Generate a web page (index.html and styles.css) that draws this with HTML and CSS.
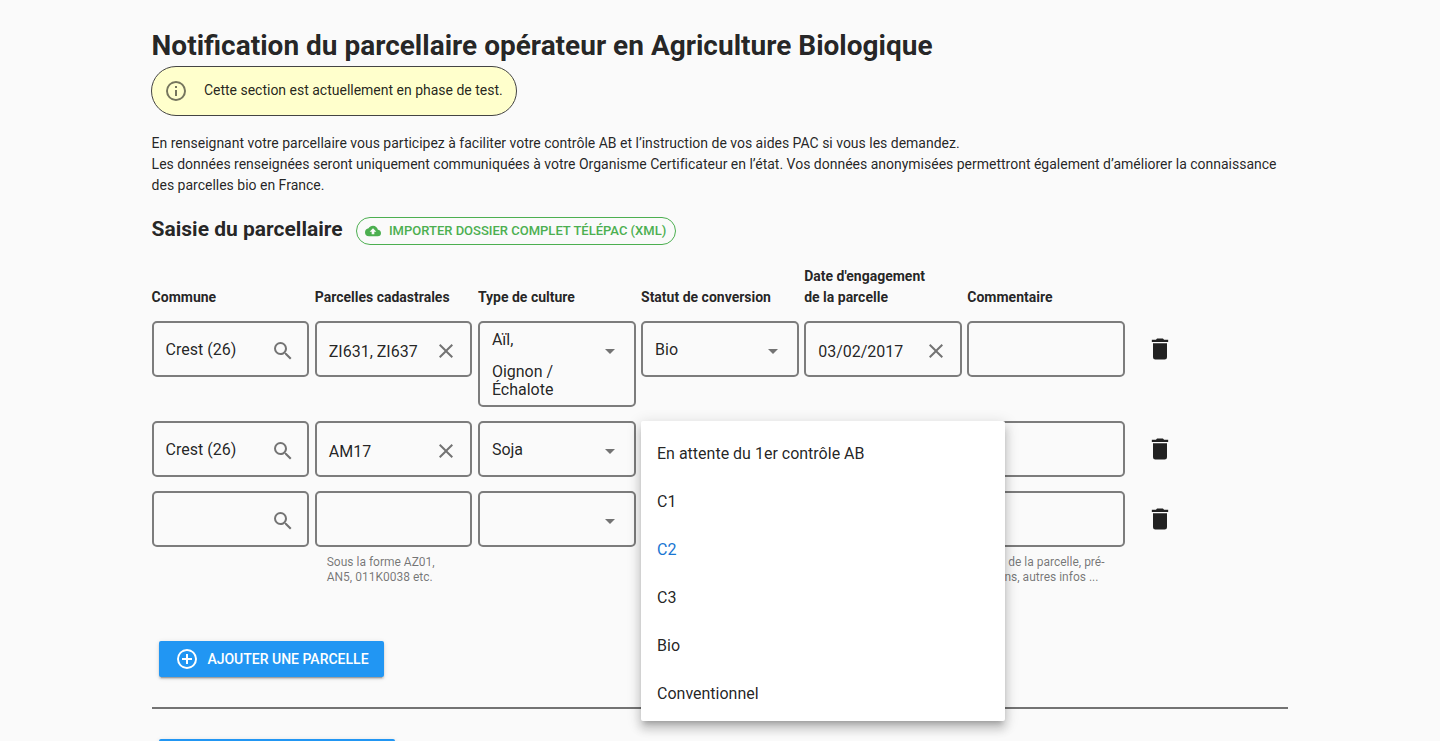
FILE: index.html
```html
<!DOCTYPE html>
<html lang="fr">
<head>
<meta charset="utf-8">
<title>Notification du parcellaire</title>
<link rel="stylesheet" href="styles.css">
</head>
<body>
<svg class="defs" width="0" height="0" aria-hidden="true">
  <symbol id="search" viewBox="0 0 24 24"><path d="M9.5,3A6.5,6.5 0 0,1 16,9.5C16,11.11 15.41,12.59 14.44,13.73L14.71,14H15.5L20.5,19L19,20.5L14,15.5V14.71L13.73,14.44C12.59,15.41 11.11,16 9.5,16A6.5,6.5 0 0,1 3,9.5A6.5,6.5 0 0,1 9.5,3M9.5,5C7,5 5,7 5,9.5C5,12 7,14 9.5,14C12,14 14,12 14,9.5C14,7 12,5 9.5,5Z"/></symbol>
  <symbol id="close" viewBox="0 0 24 24"><path d="M19,6.41L17.59,5L12,10.59L6.41,5L5,6.41L10.59,12L5,17.59L6.41,19L12,13.41L17.59,19L19,17.59L13.41,12L19,6.41Z"/></symbol>
  <symbol id="down" viewBox="0 0 24 24"><path d="M7,10L12,15L17,10H7Z"/></symbol>
  <symbol id="trash" viewBox="0 0 24 24"><path d="M19,4H15.5L14.5,3H9.5L8.5,4H5V6H19M6,19A2,2 0 0,0 8,21H16A2,2 0 0,0 18,19V7H6V19Z"/></symbol>
  <symbol id="info" viewBox="0 0 24 24"><path d="M11,9H13V7H11M12,20C7.59,20 4,16.41 4,12C4,7.59 7.59,4 12,4C16.41,4 20,7.59 20,12C20,16.41 16.41,20 12,20M12,2A10,10 0 0,0 2,12A10,10 0 0,0 12,22A10,10 0 0,0 22,12A10,10 0 0,0 12,2M11,17H13V11H11V17Z"/></symbol>
  <symbol id="plus" viewBox="0 0 24 24"><path d="M12,20C7.59,20 4,16.41 4,12C4,7.59 7.59,4 12,4C16.41,4 20,7.59 20,12C20,16.41 16.41,20 12,20M12,2A10,10 0 0,0 2,12A10,10 0 0,0 12,22A10,10 0 0,0 22,12A10,10 0 0,0 12,2M13,7H11V11H7V13H11V17H13V13H17V11H13V7Z"/></symbol>
  <symbol id="upload" viewBox="0 0 24 24"><path d="M14,13V17H10V13H7L12,8L17,13M19.35,10.03C18.67,6.59 15.64,4 12,4C9.11,4 6.6,5.64 5.35,8.03C2.34,8.36 0,10.9 0,14A6,6 0 0,0 6,20H19A5,5 0 0,0 24,15C24,12.36 21.95,10.22 19.35,10.03Z"/></symbol>
</svg>
<main class="page">
  <h1>Notification du parcellaire opérateur en Agriculture Biologique</h1>
  <div class="alert"><svg class="icon"><use href="#info"/></svg><span>Cette section est actuellement en phase de test.</span></div>
  <p class="intro">En renseignant votre parcellaire vous participez à faciliter votre contrôle AB et l’instruction de vos aides PAC si vous les demandez.<br>Les données renseignées seront uniquement communiquées à votre Organisme Certificateur en l’état. Vos données anonymisées permettront également d’améliorer la connaissance des parcelles bio en France.</p>
  <div class="heading">
    <h2>Saisie du parcellaire</h2>
    <button class="import"><svg class="icon"><use href="#upload"/></svg><span>Importer dossier complet Télépac (XML)</span></button>
  </div>
  <div class="row labels">
    <span>Commune</span><span>Parcelles cadastrales</span><span>Type de culture</span><span>Statut de conversion</span><span>Date d'engagement<br>de la parcelle</span><span>Commentaire</span>
  </div>
  <div class="row">
    <div class="field"><span>Crest (26)</span><svg class="icon"><use href="#search"/></svg></div>
    <div class="field text"><span>ZI631, ZI637</span><svg class="icon"><use href="#close"/></svg></div>
    <div class="field multi"><div><span>Aïl,</span><span>Oignon /<br>Échalote</span></div><svg class="icon"><use href="#down"/></svg></div>
    <div class="field"><span>Bio</span><svg class="icon"><use href="#down"/></svg></div>
    <div class="field text"><span>03/02/2017</span><svg class="icon"><use href="#close"/></svg></div>
    <div class="field"></div>
    <button class="delete"><svg class="icon"><use href="#trash"/></svg></button>
  </div>
  <div class="row">
    <div class="field"><span>Crest (26)</span><svg class="icon"><use href="#search"/></svg></div>
    <div class="field text"><span>AM17</span><svg class="icon"><use href="#close"/></svg></div>
    <div class="field"><span>Soja</span><svg class="icon"><use href="#down"/></svg></div>
    <div class="select">
      <div class="field"></div>
      <ul class="menu">
        <li>En attente du 1er contrôle AB</li>
        <li>C1</li>
        <li class="selected">C2</li>
        <li>C3</li>
        <li>Bio</li>
        <li>Conventionnel</li>
      </ul>
    </div>
    <div class="field"></div>
    <div class="field"></div>
    <button class="delete"><svg class="icon"><use href="#trash"/></svg></button>
  </div>
  <div class="row last">
    <div class="field"><span></span><svg class="icon"><use href="#search"/></svg></div>
    <div><div class="field"></div><p class="hint">Sous la forme AZ01,<br>AN5, 011K0038 etc.</p></div>
    <div class="field"><span></span><svg class="icon"><use href="#down"/></svg></div>
    <div class="field"></div>
    <div class="field"></div>
    <div><div class="field"></div><p class="hint">Nom de la parcelle, pré-<br>cisions, autres infos ...</p></div>
    <button class="delete"><svg class="icon"><use href="#trash"/></svg></button>
  </div>
  <button class="primary"><svg class="icon"><use href="#plus"/></svg><span>Ajouter une parcelle</span></button>
  <hr>
  <button class="primary next"></button>
</main>
</body>
</html>
```
FILE: styles.css
```css
* { box-sizing: border-box; margin: 0; padding: 0; }
html { height: 100%; overflow: hidden; }
body {
  height: 100%;
  overflow: hidden;
  background: #fafafa;
  color: rgba(0, 0, 0, .87);
  font: 14px/21px Roboto, sans-serif;
}
button { border: 0; background: none; color: inherit; font: inherit; }
.defs { position: absolute; }
.icon { width: 24px; height: 24px; flex: none; fill: currentColor; }
.page { width: 1136.6px; margin-left: 151.6px; padding-top: 25px; }
h1 { font-size: 28px; line-height: 42px; height: 41px; font-weight: 700; white-space: nowrap; }
.alert {
  display: flex;
  align-items: center;
  gap: 15.5px;
  width: 366px;
  height: 50px;
  margin-left: -.2px;
  padding: 0 12px;
  border: 1px solid #444;
  border-radius: 25px;
  background: #ffc;
}
.alert .icon { color: rgba(0, 0, 0, .54); }
.alert span { margin-top: -2px; letter-spacing: -.006px; white-space: nowrap; }
.intro { margin-top: 17px; letter-spacing: -.006px; }
.heading { display: flex; align-items: center; gap: 13.3px; height: 38px; margin-top: 14px; }
h2 { font-size: 21px; line-height: 32px; font-weight: 700; white-space: nowrap; }
.import {
  display: flex;
  align-items: center;
  gap: 8px;
  width: 320px;
  height: 28px;
  margin-top: 3px;
  padding-left: 8px;
  border: 1px solid #4caf50;
  border-radius: 14px;
  color: #4caf50;
  font-size: 13px;
  font-weight: 500;
  text-transform: uppercase;
  white-space: nowrap;
}
.import .icon { width: 16px; height: 16px; }
.row {
  display: grid;
  grid-template-columns: repeat(7, 1fr);
  column-gap: 5.4px;
  align-items: start;
  margin-bottom: 14px;
}
.labels { align-items: end; height: 42px; margin: 18px 0 13px; font-weight: 700; white-space: nowrap; }
.field {
  display: flex;
  justify-content: space-between;
  height: 56px;
  padding: 16px 12px 0;
  border: 2px solid #7c7c7c;
  border-radius: 5px;
  font-size: 16px;
  line-height: 20px;
}
.field > span { margin-top: 1px; white-space: nowrap; }
.field.text > span { margin-top: 3px; }
.field .icon { color: rgba(0, 0, 0, .54); }
.field.multi { height: 86px; padding-top: 8px; line-height: 18px; }
.multi div { display: grid; row-gap: 14px; align-content: start; }
.multi .icon { margin-top: 8px; }
.delete { width: 28px; height: 28px; margin: 14px 0 0 16px; }
.delete .icon { width: 28px; height: 28px; display: block; }
.select { position: relative; }
.menu {
  position: absolute;
  z-index: 1;
  top: 0;
  left: 0;
  width: 364px;
  height: 300px;
  padding: 9px 0 7px;
  background: #fff;
  border-radius: 2px;
  list-style: none;
  font-size: 16px;
  box-shadow: 0 5px 5px -3px rgba(0, 0, 0, .2), 0 8px 10px 1px rgba(0, 0, 0, .14), 0 3px 14px 2px rgba(0, 0, 0, .12);
}
.menu li { height: 48px; padding: 0 16px; line-height: 48px; }
.menu .selected { color: #1976d2; }
.last { height: 136px; }
.hint {
  padding: 8px 12px 0;
  color: rgba(0, 0, 0, .54);
  font-size: 12px;
  line-height: 14.5px;
  white-space: nowrap;
}
.primary {
  display: flex;
  align-items: center;
  gap: 8px;
  width: 225px;
  height: 36px;
  margin-left: 7.8px;
  padding-left: 16px;
  background: #2196f3;
  border-radius: 2px;
  color: #fff;
  font-weight: 500;
  text-transform: uppercase;
  white-space: nowrap;
  box-shadow: 0 3px 1px -2px rgba(0, 0, 0, .2), 0 2px 2px rgba(0, 0, 0, .14), 0 1px 5px rgba(0, 0, 0, .12);
}
hr { height: 2px; margin-top: 30px; border: 0; background: #737373; }
.next { width: 236px; margin-top: 30px; }
```
